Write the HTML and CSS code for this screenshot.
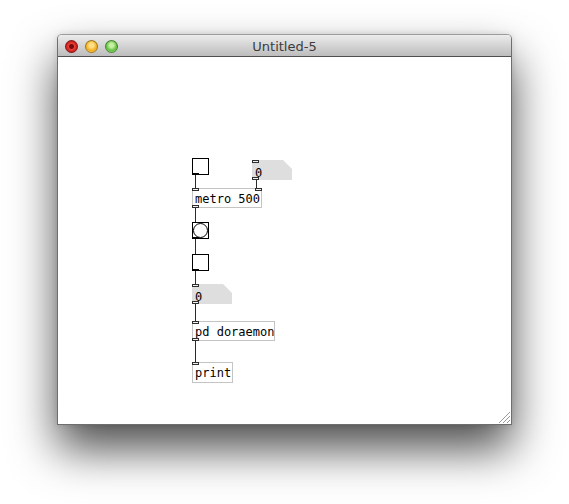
FILE: index.html
```html
<!DOCTYPE html>
<html lang="en">
<head>
    <meta charset="UTF-8">
    <title>Untitled-5</title>
    <link rel="stylesheet" href="styles.css">
</head>
<body>
    <div class="window">
        <div class="titlebar">
            <div class="lights">
                <span class="light close"></span>
                <span class="light minimize"></span>
                <span class="light zoom"></span>
            </div>
            <div class="title">Untitled-5</div>
        </div>
        <div class="canvas">
            <svg class="wires" width="453" height="368">
                <g stroke="#2b2b2b" stroke-width="1">
                    <line x1="137.5" y1="117" x2="137.5" y2="131"/>
                    <line x1="198.5" y1="121" x2="198.5" y2="131"/>
                    <line x1="137.5" y1="150" x2="137.5" y2="165"/>
                    <line x1="137.5" y1="182" x2="137.5" y2="197"/>
                    <line x1="137.5" y1="214" x2="137.5" y2="227"/>
                    <line x1="137.5" y1="246" x2="137.5" y2="264"/>
                    <line x1="137.5" y1="283" x2="137.5" y2="305"/>
                </g>
            </svg>

            <div class="gui toggle toggle-one"><span class="inlet"></span><span class="outlet"></span></div>
            <div class="numbox numbox-one"><span class="inlet"></span><span class="outlet"></span>0</div>
            <div class="obj metro"><span class="inlet"></span><span class="inlet right"></span><span class="outlet"></span>metro 500</div>
            <div class="gui bang"><span class="inlet"></span><span class="outlet"></span><span class="dot"></span></div>
            <div class="gui toggle toggle-two"><span class="inlet"></span><span class="outlet"></span></div>
            <div class="numbox numbox-two"><span class="inlet"></span><span class="outlet"></span>0</div>
            <div class="obj subpatch"><span class="inlet"></span><span class="outlet"></span>pd doraemon</div>
            <div class="obj print"><span class="inlet"></span>print</div>

            <svg class="grip" width="13" height="13">
                <g stroke="#9a9a9a" stroke-width="1">
                    <line x1="1" y1="12" x2="12" y2="1"/>
                    <line x1="5" y1="12" x2="12" y2="5"/>
                    <line x1="9" y1="12" x2="12" y2="9"/>
                </g>
            </svg>
        </div>
    </div>
</body>
</html>
```

FILE: styles.css
```css
html {
    background-color: #ffffff;
}

body {
    margin: 0;
    padding: 34px 0 79px 57px;
    background-color: #ffffff;
    font-family: "DejaVu Sans", sans-serif;
}

.window {
    width: 455px;
    height: 391px;
    box-sizing: border-box;
    border: 1px solid #6e6e6e;
    border-top-color: #9c9c9c;
    border-radius: 5px 5px 0 0;
    background-color: #ffffff;
    box-shadow: 0 24px 46px rgba(0, 0, 0, 0.7), 0 0 6px rgba(0, 0, 0, 0.12);
    display: flex;
    flex-direction: column;
}

.titlebar {
    height: 22px;
    box-sizing: border-box;
    border-bottom: 1px solid #505050;
    border-radius: 4px 4px 0 0;
    background: linear-gradient(#ececec, #d4d4d4 50%, #bdbdbd);
    display: flex;
    align-items: center;
    position: relative;
}

.lights {
    display: flex;
    gap: 7px;
    padding-left: 7px;
    padding-top: 1px;
}

.light {
    width: 13px;
    height: 13px;
    box-sizing: border-box;
    border-radius: 50%;
    border: 1px solid rgba(0, 0, 0, 0.35);
}

.close {
    background: radial-gradient(circle at 50% 50%, #7a0a0a 0 2px, #e8403c 3px, #c81e1a 70%, #ff9c94);
}

.minimize {
    background: radial-gradient(circle at 50% 40%, #ffe08a 0 2px, #f3b021 60%, #fddb6d);
}

.zoom {
    background: radial-gradient(circle at 50% 40%, #c7f0a0 0 2px, #62c145 60%, #aeea8a);
}

.title {
    position: absolute;
    left: 0;
    right: 0;
    text-align: center;
    font-size: 13px;
    color: #3c3c3c;
    padding-top: 1px;
}

.canvas {
    flex: 1;
    position: relative;
}

.wires {
    position: absolute;
    left: 0;
    top: 0;
}

/* patch objects */
.gui, .obj, .numbox {
    position: absolute;
    box-sizing: border-box;
    font-family: "DejaVu Sans Mono", monospace;
    font-size: 12px;
    color: #000000;
    white-space: nowrap;
}

.obj {
    border: 1px solid #c4c4c4;
    height: 20px;
    line-height: 14px;
    padding: 3px 0 0 2px;
    background-color: #ffffff;
}

.gui {
    width: 17px;
    height: 17px;
    border: 1px solid #000000;
    background-color: #ffffff;
}

.numbox {
    height: 20px;
    line-height: 14px;
    padding: 6px 0 0 3px;
    background-color: #dedede;
    clip-path: polygon(0 0, calc(100% - 9px) 0, 100% 9px, 100% 100%, 0 100%);
}

.inlet, .outlet {
    position: absolute;
    left: -1px;
    width: 7px;
    height: 3px;
    box-sizing: border-box;
    border: 1px solid #2e2e2e;
    background-color: #f2f2f2;
}

.inlet {
    top: -1px;
}

.outlet {
    bottom: -1px;
}

.inlet.right {
    left: auto;
    right: -1px;
}

.numbox .inlet, .numbox .outlet {
    left: 0;
}

.numbox .inlet {
    top: 0;
}

.numbox .outlet {
    bottom: 0;
}

.gui .inlet, .gui .outlet {
    border: none;
    height: 2px;
    background-color: #000000;
}

.gui .inlet {
    top: -1px;
    height: 1px;
}

.toggle-one { left: 134px; top: 101px; }
.numbox-one { left: 194px; top: 103px; width: 40px; }
.metro { left: 134px; top: 131px; width: 70px; }
.bang { left: 134px; top: 165px; }
.toggle-two { left: 134px; top: 197px; }
.numbox-two { left: 134px; top: 227px; width: 40px; }
.subpatch { left: 134px; top: 264px; width: 83px; }
.print { left: 134px; top: 305px; width: 41px; height: 21px; }

.bang .dot {
    position: absolute;
    left: 0;
    top: 0;
    width: 15px;
    height: 15px;
    box-sizing: border-box;
    border: 1px solid #000000;
    border-radius: 50%;
}

.grip {
    position: absolute;
    right: 0;
    bottom: 0;
}
```
